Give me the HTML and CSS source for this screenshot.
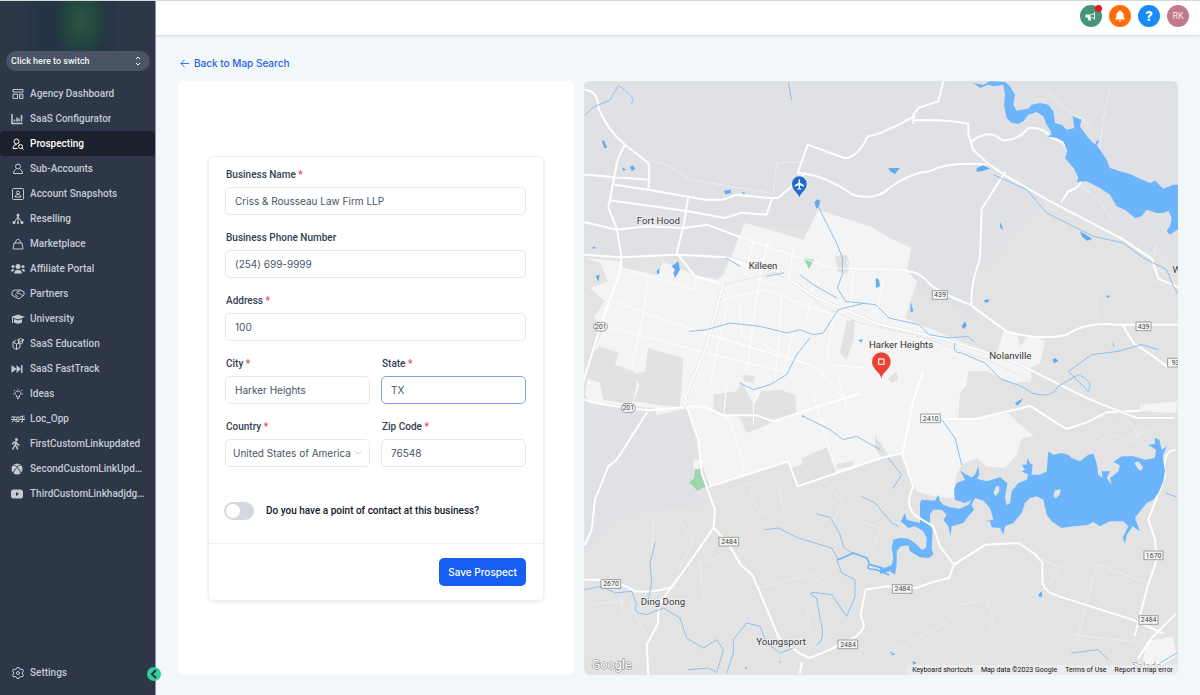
FILE: index.html
```html
<!DOCTYPE html>
<html lang="en">
  <head>
    <meta charset="UTF-8" />
    <meta name="viewport" content="width=device-width, initial-scale=1.0" />
    <title>Prospecting</title>
    <link rel="stylesheet" href="styles.css">
  </head>
  <body>
    <aside class="sidebar">
      <div class="brand"></div>
      <button type="button" class="switcher">
        Click here to switch
        <svg viewBox="0 0 12 24"><path d="M2 8l4-4 4 4M2 16l4 4 4-4" /></svg>
      </button>

      <nav class="menu">
        <a href="#"><svg viewBox="0 0 24 24"><path d="M2 3h20v5H2zM2 12h9v9H2zM15 12h7v9h-7zM15 16h4" /></svg><span>Agency Dashboard</span></a>
        <a href="#"><svg class="left" viewBox="0 0 24 24"><path class="thick" d="M2 2v19h21M7 17v-4M12 17V9M16 17v-6M21 17V4" /></svg><span>SaaS Configurator</span></a>
        <a href="#" class="active"><svg viewBox="0 0 24 24"><circle cx="9" cy="7" r="5" /><path d="M11 21H2c0-5 3-8 7-8M20 20l3 3" /><circle cx="17" cy="17" r="4" /></svg><span>Prospecting</span></a>
        <a href="#"><svg viewBox="0 0 24 24"><circle cx="12" cy="7" r="5" /><path d="M8 12c-3 2-5 5-5 9h18c0-4-2-7-5-9" /></svg><span>Sub-Accounts</span></a>
        <a href="#"><svg viewBox="0 0 24 24"><rect x="1" y="1" width="22" height="22" rx="2" /><circle cx="12" cy="9" r="3" /><path d="M6 18c1-4 3-5 6-5s5 1 6 5z" /></svg><span>Account Snapshots</span></a>
        <a href="#"><svg viewBox="0 0 24 24"><path d="M12 6v14M12 7l-7 11M12 7l7 11" /><g class="solid"><circle cx="12" cy="4" r="3" /><circle cx="4" cy="19" r="3" /><circle cx="12" cy="20" r="2" /><circle cx="20" cy="19" r="3" /></g></svg><span>Reselling</span></a>
        <a href="#"><svg viewBox="0 0 24 24"><path d="M4 10h16l2 12H2zM7 10c0-10 10-10 10 0" /></svg><span>Marketplace</span></a>
        <a href="#"><svg class="wide" viewBox="0 0 28 24"><g class="solid"><circle cx="14" cy="7" r="5" /><path d="M6 21c0-10 16-10 16 0z" /><circle cx="4" cy="7" r="3" /><circle cx="24" cy="7" r="3" /><path d="M0 17c0-6 5-6 7-4l-3 4zM28 17c0-6-5-6-7-4l3 4z" /></g></svg><span>Affiliate Portal</span></a>
        <a href="#"><svg class="wide" viewBox="0 0 28 24"><path d="M2 7l6-3h11l7 4v6l-9 7h-4L2 14zM19 5l-7 3c-2 3 2 5 4 2l7 5M8 13l6 5" /></svg><span>Partners</span></a>
        <a href="#"><svg class="wide" viewBox="0 0 28 24"><path class="solid" d="M14 3l14 5-14 5L0 8zM6 12l8 3 8-3v7c-4 3-12 3-16 0z" /><path d="M3 9v11" /></svg><span>University</span></a>
        <a href="#"><svg class="wide" viewBox="0 0 28 24"><path d="M4 8l7 4 7-3v10l-7 4-7-4zM11 12v11M4 8l6-3M13 4l6-3 7 3-7 3zM15 5v5c3 2 6 2 8 0V5" /></svg><span>SaaS Education</span></a>
        <a href="#"><svg class="left" viewBox="0 0 24 24"><path class="solid" d="M1 4l10 8V4l9 8V4h3v16h-3v-8l-9 8v-8L1 20z" /></svg><span>SaaS FastTrack</span></a>
        <a href="#"><svg viewBox="0 0 24 24"><path d="M9 18v-3c-5-3-3-9 3-9s8 6 3 9v3zM10 21h4M12 1v2M2 12h2M20 12h2M4 4l2 2M20 4l-2 2" /></svg><span>Ideas</span></a>
        <a href="#"><svg class="wide" viewBox="0 0 28 24"><path d="M3 6l-2 3M2 8h9M6 8v5M0 13h12M6 13l-4 6M7 14l4 5M12 8h4v9h-4zM18 7l9-1M17 13h11M23 7v11h-3M19 9l1 2M27 9l-1 2" /></svg><span>Loc_Opp</span></a>
        <a href="#"><svg class="left" viewBox="0 0 24 24"><circle class="solid" cx="11" cy="3" r="3" /><path class="thick" d="M3 13l2-4 5-1 3 5 4 1M10 8l-2 7 4 3 1 5M7 16l-4 7" /></svg><span>FirstCustomLinkupdated</span></a>
        <a href="#"><svg class="left" viewBox="0 0 24 24"><circle class="solid" cx="12" cy="12" r="11" /><path class="cut" d="M5 5c3-1 5 1 7 3 2-2 4-4 7-3M5 20c0-4 4-8 7-11 3 3 7 7 7 11" /></svg><span>SecondCustomLinkUpdated</span></a>
        <a href="#"><svg class="left" viewBox="0 0 24 24"><rect class="solid" x="0" y="3" width="24" height="18" rx="5" /><path class="hole" d="M10 8l6 4-6 4z" /></svg><span>ThirdCustomLinkhadjdgshd</span></a>
      </nav>

      <nav class="menu menu-bottom">
        <a href="#"><svg class="wide" viewBox="0 0 24 24"><path d="M10 1h4l1 3 3 1 3-1 2 4-2 2v4l2 2-2 4-3-1-3 1-1 3h-4l-1-3-3-1-3 1-2-4 2-2v-4L1 8l2-4 3 1 3-1z" /><circle cx="12" cy="12" r="3" /></svg><span>Settings</span></a>
      </nav>
      <button type="button" class="collapse" aria-label="Collapse sidebar">
        <svg viewBox="0 0 14 14"><path d="M9 3L5 7l4 4" /></svg>
      </button>
    </aside>

    <div class="page">
      <header class="topbar">
        <button type="button" class="round green" aria-label="Announcements">
          <svg viewBox="0 0 24 24"><path d="M1 9h8c5 0 9-2 11-5v16c-2-3-6-5-9-5l1 6H7l-2-6H1z" /><path class="slot" d="M11 10c3 0 5-1 7-2v8c-2-1-4-2-7-2z" /></svg>
          <span class="dot"></span>
        </button>
        <button type="button" class="round orange" aria-label="Notifications">
          <svg viewBox="0 0 24 24"><path d="M12 1c1 0 2 1 2 2 4 1 5 4 5 7 0 5 1 6 3 8v1H2v-1c2-2 3-3 3-8 0-3 1-6 5-7 0-1 1-2 2-2zM9 21h6c0 3-6 3-6 0z" /></svg>
        </button>
        <button type="button" class="round blue" aria-label="Help">?</button>
        <button type="button" class="round avatar">RK</button>
      </header>

      <main class="content">
        <a href="#" class="back">
          <svg viewBox="0 0 10 10"><path d="M10 5H1M5 1L1 5l4 4" /></svg>
          Back to Map Search
        </a>

        <div class="columns">
          <section class="panel">
            <form class="card">
              <div class="fields">
                <div class="field">
                  <label for="name">Business Name <em>*</em></label>
                  <input type="text" id="name" value="Criss &amp; Rousseau Law Firm LLP" />
                </div>
                <div class="field">
                  <label for="phone">Business Phone Number</label>
                  <input type="text" id="phone" value="(254) 699-9999" />
                </div>
                <div class="field">
                  <label for="address">Address <em>*</em></label>
                  <input type="text" id="address" value="100" />
                </div>
                <div class="field half">
                  <label for="city">City <em>*</em></label>
                  <input type="text" id="city" value="Harker Heights" />
                </div>
                <div class="field half">
                  <label for="state">State <em>*</em></label>
                  <input type="text" id="state" class="focused" value="TX" />
                </div>
                <div class="field half">
                  <label for="country">Country <em>*</em></label>
                  <div class="select-wrap">
                    <select id="country">
                      <option>United States of America</option>
                    </select>
                    <svg viewBox="0 0 8 8"><path d="M1 2l3 3 3-3" /></svg>
                  </div>
                </div>
                <div class="field half">
                  <label for="zip">Zip Code <em>*</em></label>
                  <input type="text" id="zip" value="76548" />
                </div>
              </div>

              <div class="contact">
                <input type="checkbox" id="contact" class="toggle" />
                <label for="contact">Do you have a point of contact at this business?</label>
              </div>

              <div class="card-footer">
                <button type="submit" class="btn">Save Prospect</button>
              </div>
            </form>
          </section>

          <section class="map">
            <svg class="map-canvas" viewBox="12 19 1782 1782" preserveAspectRatio="xMidYMid slice">
              <!-- land -->
              <rect class="land" x="0" y="0" width="1810" height="1810" />
              <path class="base" d="M0 0H1810V560L1700 530 1500 430 1400 380 1180 620 1180 730 980 620 930 490 495 445 430 610 340 600 300 550 15 540zM15 990L200 1010 330 1030 350 1140 330 1230 380 1290 120 1320 15 1440z" />
              <path class="city" d="M495 445L670 495 715 405 870 455 930 490 995 520 980 590 1012 620 975 730 1140 800 1250 840 1270 770 1310 775 1320 815 1350 780 1395 800 1380 865 1350 880 1355 920 1300 925 1220 890 1165 890 1160 930 1140 955 1135 1030 1200 1030 1285 1015 1315 1045 1362 1083 1325 1090 1310 1140 1275 1180 1220 1175 1190 1150 1145 1170 1130 1200 1120 1270 1060 1265 1010 1250 965 1130 900 1150 770 1197 650 1235 625 1160 390 1235 360 1150 350 1080 320 1000 230 1022 225 1000 30 985 15 960 25 900 60 890 45 820 70 760 40 730 75 680 30 640 85 620 60 565 15 550 120 560 130 580 230 600 250 560 340 600 410 615 430 600z" />
              <path class="block" d="M60 815L115 835 105 870 160 890 170 930 155 990 70 975 60 925 20 910 15 860zM205 820L310 850 300 1000 160 980 180 930 155 900 195 890zM400 960L470 950 485 920 520 990 545 950 600 945 645 960 650 1015 500 1075 480 1030 400 1010zM665 1150L740 1118 770 1197 650 1235 635 1180 665 1170zM765 545l35 -5 10 30 -8 30 -30 -10zM800 740l25 -5 -5 60 -20 60 -20 -20zM490 900l35 5 -5 20 -30 -5zM885 1080l40 60 -20 10 -20 -30zM925 910l25 -20 5 25 -20 10zM770 1168l50 -8 -5 15 -45 8z" />
              <path class="city" d="M1680 990l110 -10v35l-110 -5zM1700 1700l80 -15 10 60 -80 50 -20 -40zM340 1155l18 0 0 28 -18 -2z" />
              <path class="park" d="M670 550l32 6 -15 27zM345 1187l17 -6 20 52 -30 15 -25 -25 15 -12z" />

              <!-- minor streets -->
              <path class="street" d="M475 485l120 42 160 53 225 5M125 580l215 65 10 -40M205 615l-20 130 -30 130M85 675l270 95 330 100M60 750l300 80 250 60M440 700l-30 130 -20 100M540 600l-20 140 -20 150M605 650l-5 110 -15 160M430 675l120 -30 210 75 50 -10 10 -110 -20 -40M520 500l-25 100 90 30M565 500l-30 130M640 520l-15 100M480 700l5 80 90 40M700 620l-20 120M640 770l-30 120M760 720l-20 140M850 880l-100 -10 -60 70M910 620l-20 90M560 820l150 60 90 100M385 780l200 60M440 930l-8 80 30 60 30 110M550 930l-30 60 0 60M700 960l60 200M800 1000l-30 -110" />
              <path class="faint" d="M210 255l60 20 60 40 240 40M590 265l90 -5M590 265l-10 90M1400 50l65 60 40 20 60 60M1590 40l-20 90 -10 90M1555 750l-5 -80M430 1440l-70 30 10 100M300 1340l40 60 -40 80M220 1330l-5 110M150 1580l40 90M540 1540l150 -40 40 30M720 1240l60 60 -20 40M740 1220l60 80M510 1240l20 60 50 30M600 1240l10 80M680 1600l10 60M840 1340l60 20 -20 70M940 1730l150 -80 50 -60 60 -10M1220 1570l20 60 -15 40M1550 1470l-60 230M1560 1470l150 60M1660 1700l-180 -20M1380 1450l60 30 -40 60M1600 1080l50 20 60 -40M1640 1030l40 60M1590 1110l-40 -30M40 1590l90 -10M120 1570l10 40M470 1240l60 -20M1720 620l60 20M1500 330l60 50 40 60M1730 510l-10 60 50 40" />

              <!-- roads -->
              <path class="road" d="M15 45q40 5 40 55 30 70 80 110l70 55q5 30 0 80l170 30 55 0 40 -15 100 10 25 0 45 -40 35 -35M135 210q-25 40 -28 75L85 400l25 60 15 90 -5 40 -60 170 -50 160M15 300l190 15M105 330l100 15M90 377l235 33 110 20 50 -16 75 6 15 -45M325 365l-15 90 -20 80 55 70 70 20M15 443l95 22 90 -10 110 5 70 -10 100 37M15 540l105 8 170 -8 150 8 100 40M653 295l30 -85 110 40q40 0 70 -65 40 -5 140 -60M653 295q80 5 165 65 70 20 110 -20 60 -45 120 -50 60 -30 170 -20M1000 145l0 -25 15 -20 60 -20 15 -60M1000 137q90 -5 165 10l0 30 15 50 45 40 50 35 130 75 220 115 90 60 20 60 70 30M1175 200q50 -40 90 -5 40 10 80 -35 45 -5 70 30 40 10 50 40 10 50 40 90 -15 25 -40 30l-20 30M1275 293l-70 110 -5 150q-30 80 -25 135M980 590q40 0 70 40 40 30 120 60l110 80q100 30 180 10 60 -40 150 -30l180 0M1630 755l30 50 60 40 40 30 30 0" />
              <path class="road" d="M15 975q30 15 190 32l115 -10q50 -10 110 25l100 0 50 18 95 -32 160 -50M200 1015l-90 140 -25 20 -40 100 -10 90 -20 45M320 995l35 100 10 100 40 110 -5 55 -90 130 -60 80q-20 30 -15 75l-35 65 5 90M15 1515q90 -5 150 35 60 5 115 -15M402 1360l45 50 35 60 35 30 80 190 60 45 30 15q60 -20 90 -40 60 -20 75 -55l-10 -35 15 -75 60 -10 90 5q50 -20 100 -30l15 -40 95 -60 100 -5 50 35 20 25 0 60q10 30 50 40l220 70 90 40M390 1235l235 -75 28 75 250 -85 65 -15 30 -150 30 -90M1085 1033l100 0 130 -30 35 -10q90 60 110 70l60 -20 60 -30 100 -5M1785 1125q-40 5 -30 80l-50 130 20 60 5 60 -30 90 -35 135M1785 1620l-70 70 -40 60M665 1765l-5 30" />
              <path class="rail" d="M430 630l170 -40 120 100 120 55 180 40 200 70 240 110 60 20 70 40 100 20M450 545l80 25 80 40" />
              <path class="highway" d="M430 625l-50 190 -60 140 -5 40M580 580l120 85 200 85 200 45 200 65 220 110 60 25 90 35 110 0" />

              <!-- streams -->
              <path class="stream" d="M15 122l25 -25 50 -20 25 -45 20 15 25 25 -5 15M625 25l10 50M712 390l30 60 30 60 15 40 0 50 -15 40 25 40 90 10 40 40 90 20 30 30 60 10 55 -5 20 15M330 770l50 -5 70 -20 90 10 80 20 40 -10 40 15 30 -5 25 -40 20 -30 80 -20M690 790l-40 50 -30 60 -50 30 -50 15 -40 -20M440 550l40 25M560 605l50 -10M660 600l40 30 70 40M1240 300l100 45 60 70 80 40 60 30 90 20 60 45 70 35 20 50 25 40 -10 60 20 90M1125 805q-10 30 20 30l70 30 50 50q60 15 90 40 60 20 80 -20l60 -35q50 20 30 50l-60 -60 70 -50 80 -10 70 -20 50 15M1085 1035l40 55 20 80M670 1025l80 40 40 30 40 -10 70 40M845 1265l40 20 50 60 20 10M710 1318l40 10 30 50 10 40 30 20M555 1365l40 -5 60 30 100 30 20 35M225 1405l-15 60 5 60 -10 50M15 1545l50 -10 40 20 50 -5 15 40q-20 25 30 30l50 -20 50 30 20 60 50 30 40 -25 20 30 -20 70M440 1795l20 -60 0 -40 40 -50 40 10 20 50 40 30 40 -15M325 1785l60 -5 20 10M710 1710q30 -10 10 -80l-10 -60q-40 -20 5 -15l40 5 45 65 25 -60 0 -50 -40 -20 -15 -40M925 1150l40 50 -25 40M1475 1735l80 -10 30 30M1740 1765l50 -30M1758 1255l30 12" />
              <path class="river" d="M775 1455l45 -20 40 15 10 20 55 15M870 1470q-20 15 20 15l35 15" />

              <!-- Belton Lake -->
              <g transform="translate(900 0)">
                <path class="water" d="M280 25L300 40 325 30 340 35 370 30 375 60 372 90 380 130 395 145 415 148 430 140 445 120 470 112 490 125 500 150 510 165 515 180 500 185 530 190 550 200 562 230 555 250 565 262 580 280 595 310 590 322 620 320 660 340 690 360 710 395 735 405 765 430 785 425 800 405 830 415 850 415 865 408 875 430 870 455 860 470 870 480 900 460 900 330 880 330 850 342 825 318 810 325 775 310 750 298 720 290 690 280 680 255 660 225 650 212 658 198 650 198 645 210 625 190 610 170 600 155 605 135 590 130 578 125 583 160 560 165 545 150 525 145 520 110 505 90 480 85 455 90 445 102 425 105 410 108 400 90 405 60 390 35 375 22 330 20 310 30z" />
              </g>
              <!-- Stillhouse Hollow Lake -->
              <g transform="translate(900 900)">
                <path class="water" d="M0 580L15 580 35 570 40 550 35 520 40 495 60 490 85 492 105 505 125 525 138 520 140 490 130 470 105 455 85 460 62 440 75 415 80 435 120 445 120 385 125 375 165 378 175 360 180 380 190 390 210 398 240 402 265 390 275 375 255 385 225 375 222 345 230 325 255 315 240 285 255 298 275 308 285 300 295 275 298 300 290 312 320 320 360 308 382 325 375 370 380 392 390 385 395 350 415 325 440 315 445 300 425 290 435 285 425 270 440 270 442 250 450 265 458 270 455 300 480 300 500 290 505 230 520 240 545 235 565 240 575 250 600 260 625 240 640 237 650 265 655 300 668 310 665 290 690 290 680 310 695 330 690 310 715 290 720 272 700 262 725 245 760 245 795 255 825 250 828 225 805 210 825 208 825 190 838 195 845 225 860 215 848 245 855 290 850 320 835 355 820 375 800 385 780 410 765 430 780 470 758 455 740 480 735 505 728 490 745 455 730 440 690 440 660 455 640 442 620 452 580 455 545 460 515 440 500 420 490 375 470 365 450 370 435 385 425 415 400 445 375 455 370 480 360 460 335 458 330 440 312 440 340 435 330 400 310 378 285 370 275 390 282 405 265 425 250 445 215 455 212 485 205 455 190 435 200 420 185 405 160 405 150 420 150 445 158 470 155 520 160 540 145 550 120 548 90 530 85 512 62 515 50 530 50 570 45 600 30 590 0 598z" />
                <path class="island" d="M340 355l8 -20 10 0 0 15 -10 15zM520 365l5 -18 17 -3 -2 15 -12 12zM763 265l12 -5 14 18 -5 10 -10 -5z" />
                <path class="road" d="M65 235l35 100q-30 60 10 90l50 30 20 60 38 50" />
              </g>
              <path class="pond" d="M65 198l8 0 8 22 -8 0zM125 278l14 8 -10 2zM150 278l8 -6 8 10 -10 8zM432 348l20 -3 2 10 -18 4zM485 352l12 2 -6 4zM703 382l8 -8 10 4 -4 16 -8 8zM275 575l20 -15 5 25 -15 25 -5 -15 5 -10zM230 590l8 -10 0 15 -6 5zM47 603l12 -3 -4 22zM36 518l10 -2 -4 8zM887 610l10 5 3 20 -12 5zM835 796l14 -2 -6 10zM925 280l35 0 -15 18 -15 -8zM1190 280l20 -8 20 10 -20 6 -20 3zM1260 443l5 8 5 15 -10 -8zM1500 470l25 15 12 8 -15 5 -15 -10zM992 680l8 30 -8 3zM1145 755l10 -15 5 12 -8 12zM1212 676l16 -2 -3 8 -10 2zM1577 662l14 2 -8 6zM1595 800l8 14 -2 2zM1417 855l8 -5 10 8 -12 8zM665 1022l8 2 -4 5zM495 1776l7 4 -4 5zM598 1760l6 2 -3 4zM930 1730l16 10 -8 2zM997 1760l14 4 -10 6zM1305 985l25 -15 -10 15 -8 8zM1375 1560l10 -10 2 15 -8 2z" />

              <!-- road shields -->
              <g class="shield">
                <rect x="41" y="743" width="42" height="26" rx="13" /><text x="62" y="763">201</text>
                <rect x="124" y="987" width="42" height="26" rx="13" /><text x="145" y="1007">201</text>
                <rect x="1058" y="648" width="44" height="26" /><text x="1080" y="668">439</text>
                <rect x="1669" y="742" width="44" height="26" /><text x="1691" y="762">439</text>
                <rect x="1764" y="851" width="44" height="26" /><text x="1786" y="871">93</text>
                <rect x="1023" y="1018" width="58" height="26" /><text x="1052" y="1038">2410</text>
                <rect x="418" y="1388" width="58" height="26" /><text x="447" y="1408">2484</text>
                <rect x="64" y="1515" width="58" height="26" /><text x="93" y="1535">2670</text>
                <rect x="775" y="1696" width="58" height="26" /><text x="804" y="1716">2484</text>
                <rect x="938" y="1530" width="58" height="26" /><text x="967" y="1550">2484</text>
                <rect x="1693" y="1429" width="56" height="26" /><text x="1721" y="1449">1670</text>
                <rect x="1678" y="1623" width="56" height="26" /><text x="1706" y="1643">2484</text>
              </g>

              <!-- places -->
              <g class="place">
                <text x="235" y="447">Fort Hood</text>
                <text x="549" y="582">Killeen</text>
                <text x="963" y="820">Harker Heights</text>
                <text x="1291" y="854">Nolanville</text>
                <text x="249" y="1590">Ding Dong</text>
                <text x="603" y="1712">Youngsport</text>
                <text x="1790" y="594">W</text>
                <text class="dim" x="1700" y="1783">Salado</text>
              </g>

              <!-- pins -->
              <path class="pin-blue" d="M658 368c-3 -14 -22 -22 -22 -41a22 22 0 0 1 44 0c0 19 -19 27 -22 41z" />
              <path class="plane" d="M656 315q2 -4 4 0v9l12 8v4l-12 -4v8l4 3v3l-6 -2 -6 2v-3l4 -3v-8l-12 4v-4l12 -8z" />
              <path class="pin-red" d="M904 912c-2 -20 -28 -28 -28 -51a28 28 0 0 1 56 0c0 23 -26 31 -28 51z" />
              <rect class="pin-mark" x="896" y="853" width="16" height="16" />
              <text class="google" x="35" y="1783">Google</text>
            </svg>
            <div class="map-links">
              <a href="#">Keyboard shortcuts</a>
              <span>Map data ©2023 Google</span>
              <a href="#">Terms of Use</a>
              <a href="#">Report a map error</a>
            </div>
          </section>
        </div>
      </main>
    </div>
  </body>
</html>
```
FILE: styles.css
```css
:root {
  --sidebar: #2d3748;
  --sidebar-dark: #1a202c;
  --sidebar-text: #c3cad4;
  --blue: #155eef;
  --border: #e6e8ec;
  --page-bg: #f2f7fa;
}

* {
  box-sizing: border-box;
}

body {
  margin: 0;
  min-height: 100vh;
  display: flex;
  font-family: Inter, "Liberation Sans", sans-serif;
  font-size: 10px;
  color: #344054;
  background-color: var(--page-bg);
  border-top: 1px solid #d3d8dd;
}

button,
input,
select {
  font-family: inherit;
}

a {
  text-decoration: none;
}

svg {
  fill: none;
  stroke: currentColor;
  flex-shrink: 0;
}

/* sidebar */
.sidebar {
  position: relative;
  width: 156px;
  flex-shrink: 0;
  display: flex;
  flex-direction: column;
  background-color: var(--sidebar);
  border-right: 1px solid #8b93a0;
  font-family: Roboto, sans-serif;
}

.brand {
  height: 50px;
  margin: 0 34px 0 22px;
  background: radial-gradient(ellipse 28px 42px at 60% 40%, #2c5745, #24483f 50%, transparent),
    linear-gradient(90deg, transparent, #243444 20%, #243444 80%, transparent);
}

.switcher {
  display: flex;
  align-items: center;
  justify-content: space-between;
  height: 20px;
  margin: 0 5px 10px 6px;
  padding: 0 9px 0 5px;
  border: none;
  border-radius: 10px;
  background-color: #4a5464;
  color: #f1f3f5;
  font-size: 9px;
  font-weight: 500;
}

.switcher svg {
  width: 6px;
  height: 12px;
  stroke-width: 2;
}

.menu a {
  display: flex;
  align-items: center;
  height: 25px;
  padding: 0 9px 0 11px;
  border-radius: 4px;
  color: var(--sidebar-text);
  font-size: 10px;
  font-weight: 500;
}

.menu a.active {
  background-color: var(--sidebar-dark);
  color: #ffffff;
}

.menu svg {
  width: 12px;
  height: 12px;
  margin: 0 6px 0 1px;
  stroke-width: 2;
}

.menu svg.left {
  margin: 0 7px 0 0;
}

.menu svg.wide {
  width: 14px;
  margin: 0 5px 0 0;
}

.menu span {
  overflow: hidden;
  text-overflow: ellipsis;
  white-space: nowrap;
}

.menu .thick {
  stroke-width: 3;
}

.solid {
  fill: currentColor;
  stroke: none;
}

.cut {
  stroke: var(--sidebar);
}

.hole {
  fill: var(--sidebar);
  stroke: none;
}

.menu-bottom {
  margin-top: auto;
  padding-bottom: 10px;
}

.collapse {
  position: absolute;
  right: -6px;
  bottom: 14px;
  width: 14px;
  height: 14px;
  padding: 0;
  border: none;
  border-radius: 50%;
  background-color: #37ca9b;
  color: #1d3c45;
}

.collapse svg {
  display: block;
  stroke-width: 2;
}

/* top bar */
.page {
  flex: 1;
  min-width: 0;
  display: flex;
  flex-direction: column;
}

.topbar {
  display: flex;
  align-items: center;
  justify-content: flex-end;
  gap: 7px;
  height: 34px;
  padding: 0 11px 4px;
  background-color: #ffffff;
  box-shadow: 0 1px 2px rgba(0, 0, 0, 0.12);
}

.round {
  position: relative;
  display: flex;
  align-items: center;
  justify-content: center;
  width: 22px;
  height: 22px;
  padding: 0;
  border: none;
  border-radius: 50%;
  color: #ffffff;
}

.round svg {
  width: 12px;
  height: 12px;
  fill: currentColor;
  stroke: none;
}

.round .slot {
  fill: #459579;
}

.green {
  background-color: #459579;
}

.orange {
  background-color: #ff6b0d;
}

.blue {
  background-color: #188bf6;
  font-size: 13px;
  font-weight: 800;
}

.avatar {
  background-color: #c27a8b;
  color: #f6e6ea;
  font-family: Roboto, sans-serif;
  font-size: 9px;
}

.dot {
  position: absolute;
  top: 0;
  right: 0;
  width: 7px;
  height: 7px;
  border-radius: 50%;
  background-color: #f40f1c;
}

/* content */
.content {
  flex: 1;
  display: flex;
  flex-direction: column;
  padding: 21px 22px 20px;
}

.back {
  align-self: flex-start;
  display: flex;
  align-items: center;
  gap: 5px;
  height: 14px;
  margin: 0 0 11px 2px;
  color: #2563eb;
  font-size: 10px;
  font-weight: 500;
}

.back svg {
  width: 9px;
  height: 9px;
}

.columns {
  flex: 1;
  display: grid;
  grid-template-columns: 2fr 3fr;
  gap: 10px;
}

.panel {
  display: flex;
  align-items: center;
  justify-content: center;
  padding: 20px;
  background-color: #ffffff;
  border-radius: 6px;
}

.card {
  width: 100%;
  max-width: 336px;
  border: 1px solid #eff0f3;
  border-radius: 6px;
  box-shadow: 0 1px 3px rgba(16, 24, 40, 0.12);
}

.fields {
  display: grid;
  grid-template-columns: 1fr 1fr;
  gap: 16px 11px;
  padding: 11px 17px 35px 16px;
}

.field {
  grid-column: span 2;
}

.field.half {
  grid-column: span 1;
}

.field label {
  display: block;
  height: 14px;
  margin-bottom: 5px;
  padding-left: 1px;
  line-height: 14px;
}

.field label,
.contact label {
  font-family: Roboto, sans-serif;
  font-weight: 500;
}

.field em {
  color: #e5484d;
  font-style: normal;
}

.field input,
.field select {
  display: block;
  width: 100%;
  height: 28px;
  padding: 0 9px;
  border: 1px solid var(--border);
  border-radius: 5px;
  background-color: #ffffff;
  color: #475467;
  font-size: 10px;
}

.field input.focused {
  border-color: #7ba1f7;
  outline: none;
}

.select-wrap {
  position: relative;
}

.field select {
  appearance: none;
  padding: 0 7px;
}

.select-wrap svg {
  position: absolute;
  right: 8px;
  top: 10px;
  width: 8px;
  height: 8px;
  color: #c5cad3;
}

.contact {
  display: flex;
  align-items: center;
  gap: 12px;
  padding: 0 15px 23px;
  color: #101828;
}

.toggle {
  appearance: none;
  width: 30px;
  height: 18px;
  margin: 0;
  padding: 2px;
  border-radius: 9px;
  background-color: #d5d8e0;
}

.toggle::before {
  content: "";
  display: block;
  width: 14px;
  height: 14px;
  border-radius: 50%;
  background-color: #ffffff;
}

.card-footer {
  display: flex;
  justify-content: flex-end;
  padding: 14px 17px;
  border-top: 1px solid #eff0f3;
}

.btn {
  height: 28px;
  padding: 0 9px;
  border: none;
  border-radius: 5px;
  background-color: var(--blue);
  color: #ffffff;
  font-size: 10px;
  font-weight: 500;
}

/* map */
.map {
  position: relative;
  min-height: 400px;
  overflow: hidden;
  border-radius: 6px;
}

.map-canvas {
  position: absolute;
  width: 100%;
  height: 100%;
  stroke-linejoin: round;
  stroke-linecap: round;
}

.map-canvas text {
  font-family: Roboto, sans-serif;
  text-anchor: middle;
}

.land,
.base,
.city,
.block,
.park,
.water,
.pond,
.island {
  stroke: none;
}

.land {
  fill: #e3e3e3;
}

.base {
  fill: #dfe1e4;
}

.city {
  fill: #f4f4f4;
}

.block {
  fill: #e2e2e2;
}

.park {
  fill: #9fd5ad;
}

.street {
  stroke: #ffffff;
  stroke-width: 3;
}

.faint {
  stroke: #eeeeee;
  stroke-width: 3;
}

.road {
  stroke: #ffffff;
  stroke-width: 6;
}

.rail {
  stroke: #dedede;
  stroke-width: 2;
}

.highway {
  stroke: #fcfcfc;
  stroke-width: 8;
  filter: drop-shadow(0 0 1px #aaaaaa);
}

.stream {
  stroke: #8dbfee;
  stroke-width: 3;
}

.river {
  stroke: #6cb5fb;
  stroke-width: 5;
}

.water {
  fill: #6cb5fd;
}

.pond {
  fill: #62abf0;
}

.island {
  fill: #e3e3e3;
}

.shield rect {
  fill: #f7f7f7;
  stroke: #777777;
  stroke-width: 2;
}

.shield text {
  fill: #444444;
  stroke: none;
  font-size: 21px;
}

.place text {
  fill: #333333;
  stroke: #f5f5f5;
  stroke-width: 4;
  paint-order: stroke;
  font-size: 29px;
}

.place .dim {
  fill: #999999;
}

.pin-blue {
  fill: #1a68d1;
  stroke: none;
}

.pin-red {
  fill: #e84335;
  stroke: none;
}

.plane {
  fill: #ffffff;
  stroke: none;
}

.pin-mark {
  stroke: #ffd9d5;
  stroke-width: 4;
}

.map-canvas .google {
  fill: #ffffff;
  stroke: #999999;
  stroke-width: 4;
  paint-order: stroke;
  font-size: 38px;
  text-anchor: start;
}

.map-links {
  position: absolute;
  right: 0;
  bottom: 0;
  display: flex;
  gap: 8px;
  padding: 0 5px;
  background-color: rgba(240, 240, 240, 0.7);
  color: #111111;
  font-family: Roboto, sans-serif;
  font-size: 7px;
  line-height: 10px;
}

.map-links a {
  color: inherit;
}
```
